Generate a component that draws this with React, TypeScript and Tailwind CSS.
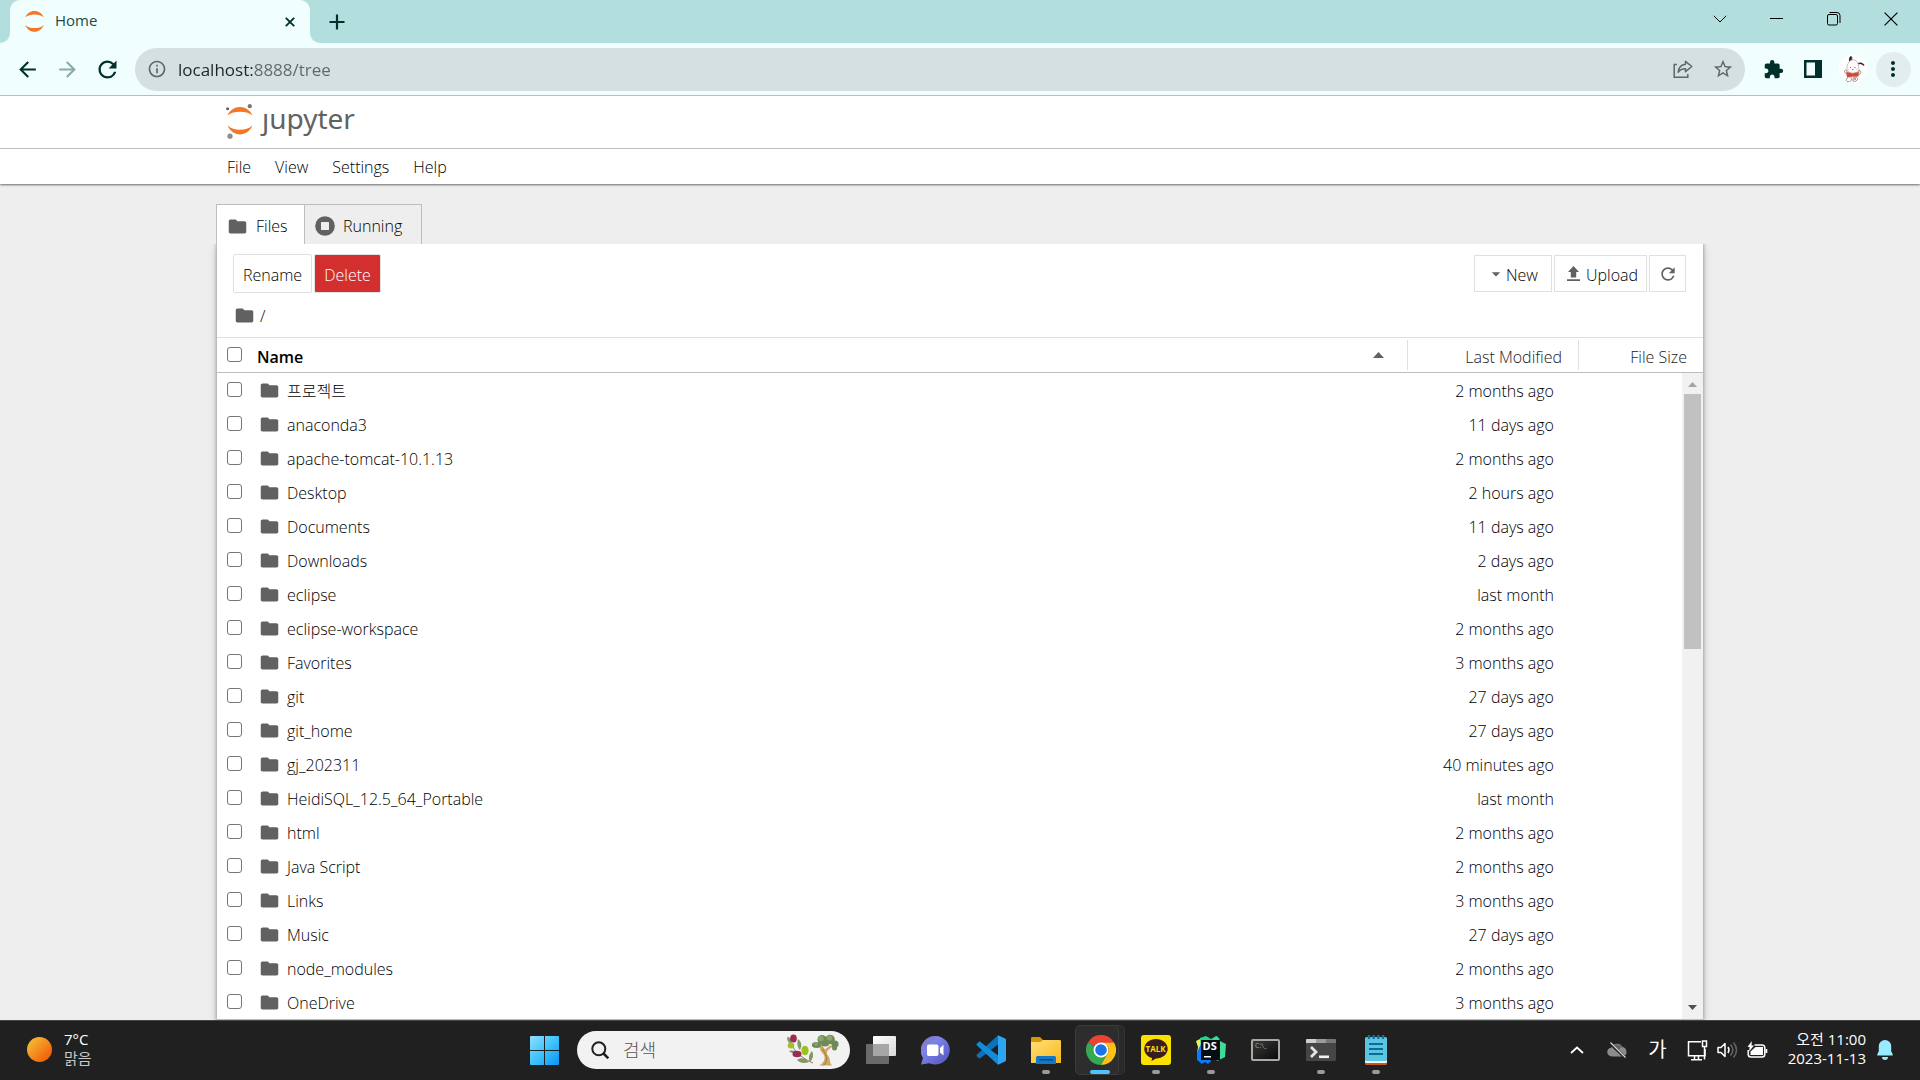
import React from "react";
import {
  MdArrowBack,
  MdArrowDropDown,
  MdArrowForward,
  MdExtension,
  MdFolder,
  MdInfoOutline,
  MdMoreVert,
  MdRefresh,
  MdStarBorder,
} from "react-icons/md";

const entries: [string, string][] = [
  ["프로젝트", "2 months ago"],
  ["anaconda3", "11 days ago"],
  ["apache-tomcat-10.1.13", "2 months ago"],
  ["Desktop", "2 hours ago"],
  ["Documents", "11 days ago"],
  ["Downloads", "2 days ago"],
  ["eclipse", "last month"],
  ["eclipse-workspace", "2 months ago"],
  ["Favorites", "3 months ago"],
  ["git", "27 days ago"],
  ["git_home", "27 days ago"],
  ["gj_202311", "40 minutes ago"],
  ["HeidiSQL_12.5_64_Portable", "last month"],
  ["html", "2 months ago"],
  ["Java Script", "2 months ago"],
  ["Links", "3 months ago"],
  ["Music", "27 days ago"],
  ["node_modules", "2 months ago"],
  ["OneDrive", "3 months ago"],
];

/* ---------- browser ---------- */

function JupyterMark({ dots, className }: { dots?: boolean; className: string }) {
  return (
    <svg className={className} viewBox="0 0 28 36" aria-hidden="true">
      <path d="M1.5 12.5C4 7 8.500 4 14 4s10 3 12.500 8.500C23 9.800 18.800 8.800 14 8.800S5 9.800 1.500 12.500Z" fill="#f37726" />
      <path d="M1.500 22.500C4 28 8.500 31.500 14 31.500s10-3.500 12.500-9C23 25.600 18.800 26.800 14 26.800S5 25.600 1.500 22.500Z" fill="#f37726" />
      {dots && (
        <>
          <circle cx="1.600" cy="5.800" r="1.500" fill="#616161" />
          <circle cx="23.800" cy="3.200" r="2.100" fill="#757575" />
          <circle cx="4" cy="33.200" r="2.600" fill="#8d8d8d" />
        </>
      )}
    </svg>
  );
}

function TabStrip() {
  return (
    <div className="flex h-[43px] shrink-0 bg-[#b2dfdd] pr-px pl-[10px] text-[#00302c]">
      <div className="relative flex w-[300px] items-center rounded-t-[10px] bg-[#f0fffe] pr-3 pl-[14px]">
        <svg className="absolute bottom-0 -left-[10px] size-[10px]" viewBox="0 0 10 10" aria-hidden="true">
          <path d="M10 0v10H0A10 10 0 0 0 10 0Z" fill="#f0fffe" />
        </svg>
        <svg className="absolute -right-[10px] bottom-0 size-[10px]" viewBox="0 0 10 10" aria-hidden="true">
          <path d="M0 0v10h10A10 10 0 0 1 0 0Z" fill="#f0fffe" />
        </svg>
        <JupyterMark className="h-[27px] w-[21px]" />
        <span className="ml-[10px] flex-1 pb-[3px] text-[15px] font-normal text-[#1d4a46]">Home</span>
        <button type="button" aria-label="Close tab" className="flex size-4 items-center justify-center">
          <svg className="size-[10px]" viewBox="0 0 10 10" stroke="currentColor" strokeWidth="1.900">
            <path d="m.8.8 8.400 8.400M9.200.8.8 9.200" />
          </svg>
        </button>
      </div>
      <button type="button" aria-label="New tab" className="ml-[17px] flex w-5 items-center justify-center">
        <svg className="size-4" viewBox="0 0 16 16" stroke="currentColor" strokeWidth="2.200">
          <path d="M8 .5v15M.5 8h15" />
        </svg>
      </button>
      <div className="ml-auto flex h-[37px] text-black">
        <button type="button" aria-label="Search tabs" className="flex w-[57px] items-center justify-center">
          <svg className="h-2 w-[14px]" viewBox="0 0 14 8" fill="none" stroke="currentColor">
            <path d="m.8.8 6.200 6.200 6.200-6.200" />
          </svg>
        </button>
        <button type="button" aria-label="Minimize" className="flex w-[57px] items-center justify-center">
          <svg className="h-[1px] w-[13px]" viewBox="0 0 13 1"><path d="M0 0h13v1H0z" /></svg>
        </button>
        <button type="button" aria-label="Restore" className="flex w-[57px] items-center justify-center">
          <svg className="size-[14px]" viewBox="0 0 14 14" fill="none" stroke="currentColor">
            <rect x=".5" y="2.500" width="10" height="10.500" rx="1.500" />
            <path d="M2.500.5H10A3 3 0 0 1 13 3.500V11" />
          </svg>
        </button>
        <button type="button" aria-label="Close" className="flex w-[57px] items-center justify-center">
          <svg className="size-[14px]" viewBox="0 0 14 14" fill="none" stroke="currentColor" strokeWidth="1.200">
            <path d="m.6.6 12.800 12.800M13.400.6.6 13.400" />
          </svg>
        </button>
      </div>
    </div>
  );
}

function ProfilePicture() {
  return (
    <svg className="size-7 rounded-full bg-white" viewBox="0 0 28 28" aria-hidden="true">
      <path d="M10.500 6.500C10 3 11 1.500 12 1.500s1 2 .5 4.500" fill="#3b2624" stroke="#3b2624" strokeWidth=".8" />
      <path d="M19 9c2-1.500 5-.5 6 1.500" fill="none" stroke="#3b2624" strokeWidth="1.500" />
      <path d="M9.500 8c1.500-3 4-3.500 6-3S19.500 8 19.500 11l.5 3c0 3-3 4-6 4s-6-1-6-4.500S8.500 9.500 9.500 8Z" fill="#fffdfb" stroke="#a89893" strokeWidth=".6" />
      <path d="m7 17 3.500.5 3 1 3.500-1 3-.5-.5 4.500-11.500.5Z" fill="#d84830" />
      <path d="M8 23c2.500-2 4.500-1 4.500 1s-1.500 3-3.500 2.700S7 25 8 23ZM14 23c3-2 5 0 4.500 1.500s-3 2.500-4.500 1.500ZM5.500 17c-.5-2 2-2.500 2.500-1l-.5 3ZM20 15.500c2.500 0 2.500 4-.5 4Z" fill="#fff" stroke="#8b6660" strokeWidth=".7" />
      <circle cx="11.500" cy="12.500" r=".5" fill="#333" />
      <circle cx="16" cy="12.500" r=".5" fill="#333" />
      <circle cx="9.800" cy="14.500" r="1" fill="#f8dcd9" />
      <circle cx="17.800" cy="14.500" r="1" fill="#f8dcd9" />
      <path d="M13 14.500h1.500" stroke="#555" strokeWidth=".7" />
      <circle cx="16" cy="24" r=".8" fill="#333" />
    </svg>
  );
}

function AddressBar() {
  const button = "flex h-10 w-10 shrink-0 items-center justify-center";
  return (
    <div className="flex h-[53px] shrink-0 items-center border-b border-[#b4cccb] bg-[#f0fffe] px-[7px] text-[#00302c]">
      <button type="button" aria-label="Back" className={button}><MdArrowBack size={25} /></button>
      <button type="button" aria-label="Forward" className={button}><MdArrowForward size={25} className="text-[#8aa9a7]" /></button>
      <button type="button" aria-label="Reload" className={button}><MdRefresh size={27} /></button>
      <div className="ml-2 flex h-[43px] flex-1 items-center rounded-full bg-[#d5e1e0] pr-[2px] pl-3">
        <MdInfoOutline size={20} className="text-[#5f6768]" />
        <input
          aria-label="Address"
          defaultValue="localhost:8888/tree"
          className="ml-[11px] min-w-0 flex-1 bg-[linear-gradient(90deg,#1c2426_75px,#5f6768_75px)] bg-clip-text pt-px text-[17px] leading-6 font-normal text-transparent outline-none"
        />
        <button type="button" aria-label="Share" className={button}>
          <svg className="size-5" viewBox="0 0 20 20" fill="none" stroke="#5f6768" strokeWidth="1.500">
            <path d="M4 5.500H1.200v12.800h13.600V15" />
            <path d="M12.500 2.300 18.800 7.500l-6.300 5.200v-3C9 9.600 7 10.600 5.200 13.200 5.600 8.800 8 5.800 12.500 5.300Z" strokeLinejoin="round" />
          </svg>
        </button>
        <button type="button" aria-label="Bookmark" className={button}><MdStarBorder size={22} className="text-[#5f6768]" /></button>
      </div>
      <div className="ml-2 flex">
        <button type="button" aria-label="Extensions" className={button}><MdExtension size={21} /></button>
        <button type="button" aria-label="Side panel" className={button}>
          <svg className="size-[18px]" viewBox="0 0 18 18"><path d="M0 0h18v18H0ZM2.500 2.500v13H11v-13Z" fill="currentColor" fillRule="evenodd" /></svg>
        </button>
        <button type="button" aria-label="Profile" className={button}><ProfilePicture /></button>
        <button type="button" aria-label="Menu" className={button}>
          <span className="flex size-[35px] items-center justify-center rounded-full bg-[#e2eeed]"><MdMoreVert size={24} /></span>
        </button>
      </div>
    </div>
  );
}

/* ---------- notebook page ---------- */

const container = "mx-auto w-full max-w-[1486px]";

function PageHeader() {
  return (
    <header className="z-10 shrink-0 bg-white shadow-[0_1px_2px_rgba(0,0,0,0.55)]">
      <div className="border-b border-[#bdbdbd]">
        <div className={container}>
          <a href="/tree" aria-label="jupyter" className="flex h-[52px] items-start pt-[7px] pl-[9px]">
            <JupyterMark dots className="h-9 w-7" />
            <span className="ml-2 text-[28px] leading-[30px] font-normal text-[#616262]" style={{ fontFamily: '"Noto Sans", sans-serif' }}>ȷupyter</span>
          </a>
        </div>
      </div>
      <nav className={container}>
        <div className="flex h-[35px] items-center gap-6 pt-px pl-[10px]">
          <button type="button">File</button>
          <button type="button">View</button>
          <button type="button">Settings</button>
          <button type="button">Help</button>
        </div>
      </nav>
    </header>
  );
}

function Tick({ label }: { label: string }) {
  return (
    <div className="pb-[2px] pl-[10px]">
      <input
        type="checkbox"
        aria-label={label}
        className="block size-[15px] appearance-none rounded-[3px] border border-[#767676] bg-white checked:bg-[#1976d2]"
      />
    </div>
  );
}

function FileTable() {
  return (
    <div className="relative min-h-0 flex-1 overflow-hidden">
      <table className="w-full table-fixed border-separate border-spacing-0">
        <colgroup>
          <col className="w-[33px]" />
          <col />
          <col className="w-[171px]" />
          <col className="w-[125px]" />
        </colgroup>
        <thead>
          <tr className="h-9 [&>th]:border-t [&>th]:border-t-[#e0e0e0] [&>th]:border-b [&>th]:border-b-[#bdbdbd] [&>th]:p-0">
            <th className="font-light"><Tick label="Select all" /></th>
            <th>
              <div className="flex h-[30px] items-center justify-between pr-[23px] pl-[7px]">
                <span className="pt-1 font-semibold">Name</span>
                <svg className="h-[6px] w-[11px]" viewBox="0 0 11 6"><path d="M0 6 5.500 0 11 6Z" fill="#616161" /></svg>
              </div>
            </th>
            <th className="text-right font-light text-[#212121]">
              <div className="h-[30px] border-l border-[#e0e0e0] pt-[5px] pr-4">Last Modified</div>
            </th>
            <th className="text-right font-light text-[#212121]">
              <div className="h-[30px] border-l border-[#e0e0e0] pt-[5px] pr-4">File Size</div>
            </th>
          </tr>
        </thead>
        <tbody>
          {entries.map(([name, modified]) => (
            <tr key={name} className="h-[34px] [&>td]:p-0">
              <td><Tick label={`Select ${name}`} /></td>
              <td>
                <a href={`/tree/${name}`} className="flex items-center pl-[9px]">
                  <MdFolder size={21} className="shrink-0 text-[#616161]" />
                  <span className="ml-[7px] pt-[2px]">{name}</span>
                </a>
              </td>
              <td className="text-right"><div className="pt-[2px] pr-6">{modified}</div></td>
              <td />
            </tr>
          ))}
        </tbody>
      </table>
      <div className="absolute top-9 right-0 bottom-0 flex w-[21px] flex-col items-center bg-[#f1f1f1]" aria-hidden="true">
        <svg className="mt-[9px] h-[5px] w-[9px]" viewBox="0 0 9 5"><path d="M0 5 4.500 0 9 5Z" fill="#a3a3a3" /></svg>
        <div className="mt-[7px] h-[255px] w-[17px] bg-[#c1c1c1]" />
        <svg className="mt-auto mb-[9px] h-[5px] w-[9px]" viewBox="0 0 9 5"><path d="M0 0 4.500 5 9 0Z" fill="#505050" /></svg>
      </div>
    </div>
  );
}

function TreePage() {
  const outlined = "flex h-[37px] items-center border border-[#e0e0e0] bg-white";
  return (
    <main className="flex min-h-0 flex-1 flex-col bg-[#eeeeee] pt-5">
      <div className={`${container} flex min-h-0 flex-1 flex-col`}>
        <div className="-ml-px flex h-10 shrink-0" role="tablist">
          <button type="button" role="tab" aria-selected="true" className="flex w-[88px] items-center border-t border-l border-[#bdbdbd] bg-white pt-[3px] pl-[10px]">
            <MdFolder size={21} className="text-[#616161]" />
            <span className="ml-[8px]">Files</span>
          </button>
          <button type="button" role="tab" aria-selected="false" className="flex w-[118px] items-center border-x border-t border-[#bdbdbd] pt-[3px] pl-[10px]">
            <svg className="size-5" viewBox="0 0 20 20" aria-hidden="true">
              <circle cx="10" cy="10" r="9.800" fill="#616161" />
              <rect x="6" y="6" width="8" height="8" rx=".5" fill="#eeeeee" />
            </svg>
            <span className="ml-[8px]">Running</span>
          </button>
        </div>
        <section className="flex min-h-0 flex-1 flex-col border-b border-[#bdbdbd] bg-white shadow-[0_0_3px_1px_rgba(0,0,0,0.26),0_2px_10px_rgba(0,0,0,0.14)] [clip-path:inset(0_-20px_0_-20px)]">
          <div className="flex items-center gap-[2px] pt-[10px] pr-[17px] pl-4">
            <button type="button" className="h-[39px] w-[79px] rounded-[2px] border border-[#e0e0e0] pt-[2px]">Rename</button>
            <button type="button" className="h-[39px] w-[67px] rounded-[2px] border border-[#e0e0e0] bg-[#d32f2f] pt-[2px] text-white">Delete</button>
            <button type="button" className={`${outlined} ml-auto w-[78px] pl-[11px]`}>
              <MdArrowDropDown size={20} className="text-[#616161]" />
              <span className="pt-[2px]">New</span>
            </button>
            <button type="button" className={`${outlined} w-[93px] pl-3`}>
              <svg className="mr-[6px] h-[15px] w-[13px] shrink-0" viewBox="0 0 13 15" fill="#616161" aria-hidden="true">
                <path d="M6.500 0 12 6H9.200v5.500H3.800V6H1ZM0 13.200h13V15H0Z" />
              </svg>
              <span className="pt-[2px]">Upload</span>
            </button>
            <button type="button" aria-label="Refresh" className={`${outlined} w-[37px] justify-center`}>
              <MdRefresh size={20} className="text-[#616161]" />
            </button>
          </div>
          <div className="flex h-[44px] shrink-0 items-center pt-px pl-[17px]">
            <MdFolder size={21} className="text-[#616161]" />
            <a href="/tree" className="ml-[5px]">/</a>
          </div>
          <FileTable />
        </section>
      </div>
    </main>
  );
}

/* ---------- taskbar ---------- */

function TaskButton({ label, mark, children }: { label: string; mark?: boolean; children: React.ReactNode }) {
  return (
    <button type="button" aria-label={label} className="relative flex h-[60px] w-[55px] items-center justify-center">
      {children}
      {mark && <span className="absolute bottom-[6px] left-6 h-1 w-2 rounded-full bg-[#9a9a9a]" />}
    </button>
  );
}

function SearchArt() {
  return (
    <svg className="h-8 w-[54px]" viewBox="0 0 54 32" aria-hidden="true">
      <path d="M4 4c1 9 7 18 23 25" fill="none" stroke="#9a6a5a" strokeWidth="1" />
      <path d="M1 3c4 0 5 3 4 7C2 9 1 6 1 3ZM12 5c4 3 4 7 2 11-3-3-3-7-2-11ZM3 17c4-1 7 0 8 2-3 1-6 0-8-2ZM11 26c4-3 8-2 12 2-5 2-9 1-12-2ZM26 17c2 4 1 8-2 11-2-4-1-8 2-11Z" fill="#7d9b62" />
      <ellipse cx="7.500" cy="4.500" rx="3.300" ry="4" fill="#9a2c50" />
      <ellipse cx="5" cy="11.500" rx="3.300" ry="2.900" fill="#a5bf2c" />
      <ellipse cx="19" cy="16.500" rx="3.600" ry="4.800" fill="#9cc020" />
      <ellipse cx="11" cy="20" rx="4.500" ry="3.200" fill="#9a2c50" />
      <path d="M33 31.500c4-2 6-5 5.500-9-.5-3-4-4-4.500-8l-1-4 3 1 3 4 5-4 3 1c-7 4-7 6-5 9 3 4 1 7 4 10Z" fill="#cba75f" />
      <path d="M37 15c1 4 4 6 3.500 10-.3 3-1.500 5-3 6.500" fill="none" stroke="#a17c3f" strokeWidth="1" />
      <g fill="#6f8a58">
        <ellipse cx="30.500" cy="11" rx="4.600" ry="3" />
        <circle cx="36" cy="5.500" r="4.500" />
        <circle cx="44" cy="5.500" r="4.800" />
        <circle cx="49" cy="10" r="3.600" />
        <ellipse cx="39" cy="10" rx="4" ry="2.500" />
        <circle cx="48.500" cy="14" r="2.500" />
      </g>
      <g fill="#8ba66e">
        <circle cx="35" cy="4.500" r="2.700" />
        <circle cx="43.500" cy="4" r="2.800" />
        <circle cx="30" cy="10" r="1.800" />
      </g>
    </svg>
  );
}

function Taskbar() {
  return (
    <footer className="z-10 flex h-[60px] shrink-0 items-center bg-[#202020] font-normal text-white shadow-[inset_0_1px_0_#454747]">
      <div className="flex flex-1 items-center pl-[27px]">
        <button type="button" className="flex items-center pb-[2px] text-left text-[15px] leading-[19px]">
          <span className="size-[25px] rounded-full bg-linear-to-br from-[#f2b632] from-15% to-[#f26a0c] to-75%" />
          <span className="ml-3">
            <span className="block">7°C</span>
            <span className="block text-[#c8c8c8]">맑음</span>
          </span>
        </button>
      </div>

      <div className="flex items-center">
        <TaskButton label="Start">
          <svg className="size-[29px]" viewBox="0 0 29 29">
            <defs>
              <linearGradient id="win" x1="0" y1="0" x2="1" y2="1">
                <stop offset="0" stopColor="#8fe0ff" />
                <stop offset=".5" stopColor="#3fc3fd" />
                <stop offset="1" stopColor="#0a93f5" />
              </linearGradient>
            </defs>
            <path d="M1 0h13v14H0V1a1 1 0 0 1 1-1ZM15 0h13a1 1 0 0 1 1 1v13H15ZM0 15h14v14H1a1 1 0 0 1-1-1ZM15 15h14v13a1 1 0 0 1-1 1H15Z" fill="url(#win)" />
          </svg>
        </TaskButton>
        <div className="mr-[3px] ml-[5px] flex h-[38px] w-[273px] items-center rounded-full bg-[#f2f2f2] pr-[10px] pl-[14px]">
          <svg className="size-[18px] shrink-0" viewBox="0 0 18 18" fill="none" stroke="#1f1f1f" strokeWidth="2">
            <circle cx="7.800" cy="7.800" r="6.500" />
            <path d="m12.500 12.500 4.800 4.800" strokeWidth="2.500" />
          </svg>
          <input
            aria-label="검색"
            placeholder="검색"
            className="ml-[14px] w-0 flex-1 bg-transparent text-[18px] font-light text-black outline-none placeholder:text-[#555555]"
          />
          <SearchArt />
        </div>
        <TaskButton label="Task view">
          <svg className="h-7 w-[30px]" viewBox="0 0 30 28">
            <defs>
              <linearGradient id="tv" x1="0" y1="0" x2="1" y2="1"><stop stopColor="#fff" /><stop offset="1" stopColor="#d8d8d8" /></linearGradient>
            </defs>
            <rect y="8" width="23" height="20" rx="1" fill="#6a6a6a" />
            <rect x="7" width="23" height="20" rx="1" fill="url(#tv)" />
            <path d="M7 8h16v12H7Z" fill="#a6a6a6" />
          </svg>
        </TaskButton>
        <TaskButton label="Chat">
          <svg className="size-[29px]" viewBox="0 0 29 29">
            <defs>
              <linearGradient id="chat" x1="0" y1="0" x2="1" y2="1"><stop stopColor="#8f6fa8" /><stop offset=".35" stopColor="#7b83eb" /><stop offset="1" stopColor="#4f52b8" /></linearGradient>
            </defs>
            <path d="M14.500 0a14.300 14.300 0 1 1-6 27.300L0 28.500 2 22A14.300 14.300 0 0 1 14.500 0Z" fill="url(#chat)" />
            <rect x="6" y="8.500" width="11.500" height="11.500" rx="1.800" fill="#fff" />
            <path d="m19 12 3.500-3.200v10.600L19 16.500Z" fill="#fff" />
          </svg>
        </TaskButton>
        <TaskButton label="Visual Studio Code">
          <svg className="size-[30px]" viewBox="0 0 30 30">
            <path d="M22 .3 1 19.500c-.7.700-.7 1.500 0 2.100L2.700 23c.6.500 1.200.5 1.800.1L22 9.500Z" fill="#0b71b8" />
            <path d="M22 29.700 1 10.500c-.7-.7-.7-1.500 0-2.100L2.700 7c.6-.5 1.200-.5 1.800-.1L22 20.500Z" fill="#138bd8" />
            <path d="m22 .2 7 3.300c.6.300 1 .8 1 1.500v20c0 .7-.4 1.200-1 1.500l-7 3.300Z" fill="#2ea5f2" />
          </svg>
        </TaskButton>
        <TaskButton label="File Explorer" mark>
          <svg className="h-[27px] w-[30px]" viewBox="0 0 30 27">
            <defs><linearGradient id="fe" x1="0" y1="0" x2="1" y2="1"><stop stopColor="#ffe07a" /><stop offset="1" stopColor="#f9b81c" /></linearGradient></defs>
            <path d="M0 1.500C0 .5.500 0 1.500 0H9l3 3v6H0Z" fill="#dc9600" />
            <path d="M0 5h9.500L12 3h16.500c1 0 1.500.5 1.500 1.500V26H0Z" fill="url(#fe)" />
            <path d="M5 27v-6c0-1.400.8-2 2-2h16c1.200 0 2 .6 2 2v6Z" fill="#1478c8" />
            <rect x="8" y="22" width="14" height="1.500" rx=".7" fill="#0b4a86" />
          </svg>
        </TaskButton>
        <div className="relative">
          <span className="absolute top-[5px] left-2 h-[50px] w-[44px] rounded-[5px] border border-[#343434] bg-[#292929]" />
          <span className="absolute top-[5px] left-[2px] h-[50px] w-[44px] rounded-[5px] border border-[#3c3c3c] bg-[#2d2d2d]" />
          <TaskButton label="Chrome">
            <svg className="size-[30px]" viewBox="0 0 48 48">
              <path d="M24 24 3.200 12A24 24 0 0 1 44.800 12Z" fill="#ea4335" />
              <path d="M3.200 12A24 24 0 0 0 24 48L34.400 30 24 24Z" fill="#34a853" />
              <path d="M44.800 12A24 24 0 0 1 24 48L34.400 30A12 12 0 0 0 34.400 18L24 12Z" fill="#fbc116" />
              <path d="M24 12h20.800L44 11H24Z" fill="#ea4335" />
              <circle cx="24" cy="24" r="12" fill="#fff" />
              <circle cx="24" cy="24" r="9.300" fill="#1a73e8" />
            </svg>
            <span className="absolute bottom-[6px] left-[17px] h-1 w-5 rounded-full bg-[#4cc2ff]" />
          </TaskButton>
        </div>
        <TaskButton label="KakaoTalk" mark>
          <span className="relative flex size-[30px] items-center justify-center rounded-[3px] bg-[#fae100]">
            <svg className="absolute top-1 left-[3px] h-[22px] w-6" viewBox="0 0 24 22">
              <path d="M12 0c6.500 0 11.700 4.300 11.700 9.800S18.500 19.500 12 19.500L7.500 22l.6-3C3.500 17.800.3 14.200.3 9.800.3 4.300 5.500 0 12 0Z" fill="#3a1d1f" />
            </svg>
            <span className="relative pb-[2px] text-[8px] leading-[10px] font-bold text-[#fae100]">TALK</span>
          </span>
        </TaskButton>
        <TaskButton label="DataSpell" mark>
          <span className="relative block size-[30px]">
            <svg className="absolute inset-0 size-[30px]" viewBox="0 0 30 30">
              <path d="m4 3 6-2 5 3 5-3 4 3-10 8H4Z" fill="#21d789" />
              <path d="m16 5 5-4 3 5 6 3-1 13-8 4Z" fill="#3ddc97" />
              <path d="M0 6l4-2 2 20-5-6 1-6Z" fill="#e8f25a" />
              <path d="m1 17 4-8 10 17-3 3-3-2-3 2-5-4Z" fill="#087cfa" />
              <path d="M5 5h19v20H5Z" fill="#070d14" />
              <path d="M8 21h7v1.500H8Z" fill="#fff" />
            </svg>
            <span className="absolute top-[5px] left-[7px] text-[11px] leading-3 font-bold">DS</span>
          </span>
        </TaskButton>
        <TaskButton label="Command Prompt">
          <span className="flex h-[22px] w-[29px] items-start rounded-[2px] border-2 border-[#a9a9a9] bg-linear-to-br from-[#3a3a3a] to-[#0c0c0c] px-[2px] text-[7px] leading-[10px] text-[#a0a0a0]">C:\_</span>
        </TaskButton>
        <TaskButton label="Terminal" mark>
          <svg className="h-[22px] w-[30px]" viewBox="0 0 30 22">
            <rect width="30" height="22" rx="1.500" fill="#464646" />
            <path d="M1 0h9v4H0V1a1 1 0 0 1 1-1Z" fill="#cfcfcf" />
            <path d="M10 0h10v4H10Z" fill="#9b9b9b" />
            <path d="M20 0h9a1 1 0 0 1 1 1v3H20Z" fill="#767676" />
            <path d="m5 8 5 5-5 5" fill="none" stroke="#e6e6e6" strokeWidth="2.800" />
            <path d="M13 16.500h10v2.600H13Z" fill="#f2f2f2" />
          </svg>
        </TaskButton>
        <TaskButton label="Notepad" mark>
          <svg className="h-[30px] w-[22px]" viewBox="0 0 22 30">
            <rect y="3" width="22" height="27" rx="1.500" fill="#c45a14" />
            <rect y="3" width="22" height="25" rx="1" fill="#f2f2f2" />
            <rect y="2" width="22" height="24" rx="1.500" fill="#5cc6e0" />
            <path d="M4 9h14M4 14h14M4 19h14" stroke="#0a6c9c" strokeWidth="1.800" />
            <path d="M4 0v4M8.700 0v4M13.300 0v4M18 0v4" stroke="#12729c" strokeWidth="2.400" />
          </svg>
        </TaskButton>
      </div>

      <div className="flex flex-1 items-center justify-end pr-[27px]">
        <button type="button" aria-label="Show hidden icons" className="mr-[23px]">
          <svg className="h-2 w-[14px]" viewBox="0 0 14 8" fill="none" stroke="#fff" strokeWidth="1.800"><path d="m1 7 6-5.500L13 7" /></svg>
        </button>
        <button type="button" aria-label="OneDrive" className="mr-[20px]">
          <svg className="h-4 w-[21px]" viewBox="0 0 21 16">
            <path d="M5 14.500a4.500 4.500 0 0 1-.5-9A6 6 0 0 1 15.500 5a5 5 0 0 1 1 9.500Z" fill="#8b8b8b" />
            <path d="M5 5.500A6 6 0 0 1 15.500 5L9 9Z" fill="#666" />
            <path d="M3 1 18 15.500" stroke="#202020" strokeWidth="3" />
            <path d="M3.500.5 18.500 15.500" stroke="#d8d8d8" strokeWidth="1.300" />
          </svg>
        </button>
        <button type="button" className="mr-5 text-[20px] leading-6">가</button>
        <button type="button" aria-label="Network, volume, battery" className="mr-3 flex items-center gap-[9px]">
          <svg className="size-[21px]" viewBox="0 0 21 21" fill="none" stroke="#fff" strokeWidth="1.500">
            <path d="M14 1.800H1.500v14H18V9M4 19.800h11M7.500 16v3.500M11.500 16v3.500" />
            <path d="M15.500 1h4v5.500h-4ZM17.500 6.500v13" />
          </svg>
          <svg className="h-[18px] w-[21px]" viewBox="0 0 21 18" fill="none" stroke="#fff" strokeWidth="1.500">
            <path d="M1 6.500h3L8 2.500v13l-4-4H1Z" strokeLinejoin="round" />
            <path d="M11 6c1.300 2 1.300 4 0 6" />
            <path d="M13.500 3.500c3 3.500 3 7.500 0 11M16.500 1.500c4 4.500 4 10.500 0 15" stroke="#666" />
          </svg>
          <svg className="h-[18px] w-[21px]" viewBox="0 0 21 18" fill="none" stroke="#fff" strokeWidth="1.500">
            <path d="M7.500 4H15c1.800 0 2.800 1 2.800 2.800v6.400c0 1.800-1 2.800-2.800 2.800H4c-1.800 0-2.800-1-2.800-2.800V9" />
            <path d="M8.500 6H16v8H3.500v-3.500Z" fill="#fff" stroke="none" />
            <path d="M18.500 8h1.800v4h-1.800Z" fill="#fff" stroke="none" />
            <path d="M4.800 0 .5 6h2.200L2 10.500 7 4.500H4.500Z" fill="#fff" stroke="none" />
          </svg>
        </button>
        <button type="button" className="ml-2 flex items-center text-right text-[15px] leading-[19px]">
          <span className="pb-[3px]">
            <span className="block">오전 11:00</span>
            <span className="block">2023-11-13</span>
          </span>
          <svg className="ml-[11px] h-5 w-4" viewBox="0 0 16 20" fill="#99ebff" aria-label="Notifications">
            <path d="M8 0a6.200 6.200 0 0 1 6.200 6.200v5l1.600 3.200c.3.600 0 1.100-.7 1.100H.9c-.7 0-1-.5-.7-1.100l1.600-3.200v-5A6.200 6.200 0 0 1 8 0ZM5 17h6a3 3 0 0 1-6 0Z" />
          </svg>
        </button>
      </div>
    </footer>
  );
}

export default function App() {
  return (
    <div
      className="flex h-screen flex-col overflow-hidden bg-[#eeeeee] text-[16px] leading-6 font-light text-black"
      style={{ fontFamily: '"Open Sans", "Noto Sans CJK KR", sans-serif' }}
    >
      <TabStrip />
      <AddressBar />
      <PageHeader />
      <TreePage />
      <Taskbar />
    </div>
  );
}
